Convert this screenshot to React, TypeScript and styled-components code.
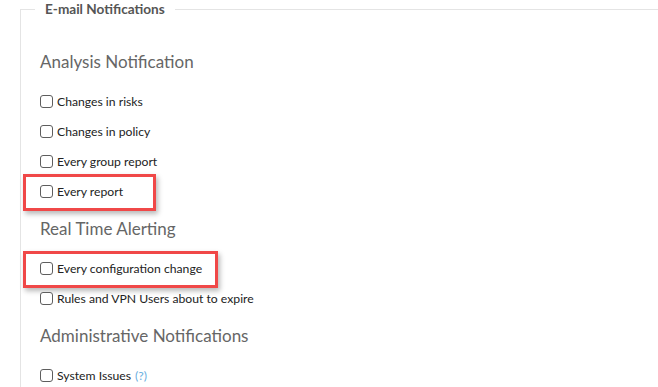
import React from "react";
import styled, { createGlobalStyle } from "styled-components";

const GlobalStyle = createGlobalStyle`
  html, body {
    margin: 0;
    background: #ffffff;
    overflow: hidden;
  }
  body {
    font-family: Lato, "Open Sans", sans-serif;
  }
`;

const Page = styled.div`
  height: 100vh;
  padding-left: 20px;
  box-sizing: border-box;
  overflow: hidden;
`;

const Fieldset = styled.fieldset`
  margin: 0 -4px 0 0;
  border: 1px solid #e4e4e4;
  border-right: none;
  border-bottom: none;
  padding: 0 0 0 19px;
  height: 420px;
`;

const Legend = styled.legend`
  margin-left: -5px;
  padding: 0 10px;
  font-size: 13.6px;
  font-weight: 700;
  line-height: 18px;
  color: #555555;
`;

const Section = styled.section`
  display: flex;
  flex-direction: column;
`;

const Heading = styled.h3<{ $first?: boolean }>`
  margin: ${({ $first }) => ($first ? "32px" : "11px")} 0 12px 0;
  font-size: 17px;
  font-weight: 400;
  line-height: 24px;
  color: #666666;
`;

const Row = styled.label`
  position: relative;
  display: flex;
  align-items: center;
  gap: 4px;
  height: 30px;
  font-size: 12.2px;
  color: #222222;
`;

const Box = styled.input`
  appearance: none;
  box-sizing: border-box;
  width: 13px;
  height: 13px;
  margin: 0;
  border: 1px solid #5e5e5e;
  border-radius: 3px;
  background: #ffffff;
`;

const Highlight = styled.span<{ $width: number }>`
  position: absolute;
  left: -17px;
  top: -2px;
  bottom: -5px;
  box-sizing: border-box;
  width: ${({ $width }) => $width}px;
  border: 3px solid #f04848;
  box-shadow: 2px 3px 5px rgba(0, 0, 0, 0.28);
  pointer-events: none;
`;

const Help = styled.span`
  margin-left: 1px;
  color: #6aaee0;
`;

type Item = { label: string; mark?: number; help?: boolean };

const sections: { title: string; items: Item[] }[] = [
  {
    title: "Analysis Notification",
    items: [
      { label: "Changes in risks" },
      { label: "Changes in policy" },
      { label: "Every group report" },
      { label: "Every report", mark: 133 },
    ],
  },
  {
    title: "Real Time Alerting",
    items: [
      { label: "Every configuration change", mark: 195 },
      { label: "Rules and VPN Users about to expire" },
    ],
  },
  {
    title: "Administrative Notifications",
    items: [{ label: "System Issues", help: true }],
  },
];

export default function App() {
  return (
    <>
      <GlobalStyle />
      <Page>
        <Fieldset>
          <Legend>E-mail Notifications</Legend>
          {sections.map((s, i) => (
            <Section key={s.title}>
              <Heading $first={i === 0}>{s.title}</Heading>
              {s.items.map((it) => (
                <Row key={it.label}>
                  <Box type="checkbox" />
                  <span>
                    {it.label}
                    {it.help && <Help> (?)</Help>}
                  </span>
                  {it.mark && <Highlight $width={it.mark} />}
                </Row>
              ))}
            </Section>
          ))}
        </Fieldset>
      </Page>
    </>
  );
}
